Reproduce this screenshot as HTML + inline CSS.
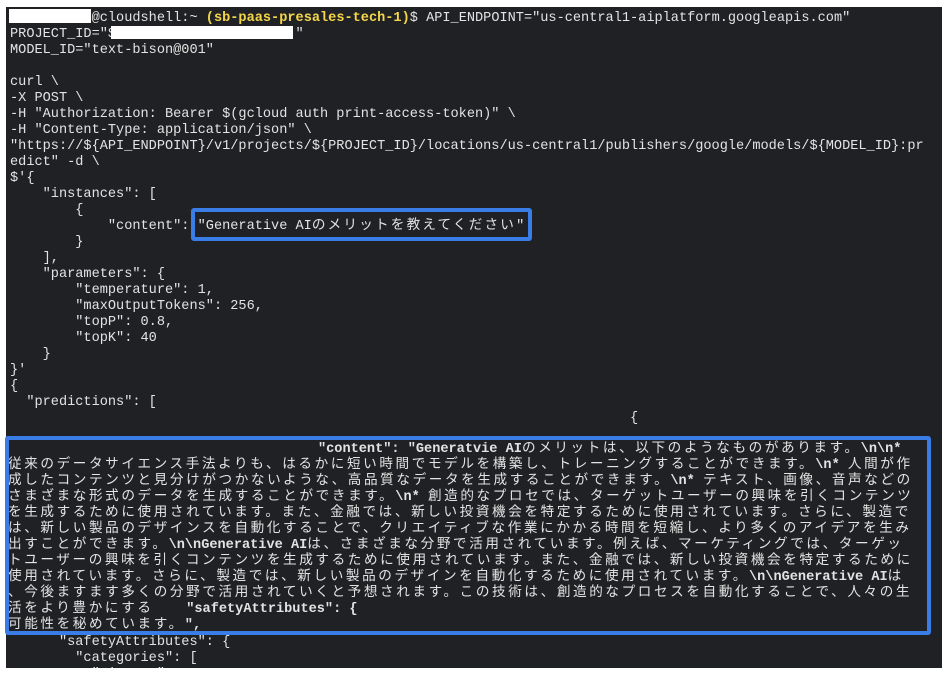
<!DOCTYPE html>
<html><head><meta charset="utf-8"><style>
body{margin:0;width:949px;height:680px;background:#fff;position:relative;overflow:hidden}
#t{position:absolute;left:6px;top:7px;width:936px;height:661px;background:#202124}
.l{position:absolute;left:10px;margin-top:3px;white-space:pre;font-family:"Liberation Mono","Noto Sans CJK JP",monospace;font-size:13.6px;line-height:16px;color:#e3e3e3}
.y{color:#f5d64a;font-weight:bold}
.jp{font-family:"Liberation Mono","Noto Sans CJK JP",monospace;font-size:13.6px;letter-spacing:2.6px;color:#e3e3e3}
.jp b{letter-spacing:0;font-size:13.6px;font-family:"Liberation Mono",monospace}
.w{position:absolute;background:#fff}
.box{position:absolute;border:4px solid #3a7de6;border-radius:3px;box-sizing:border-box}
</style></head><body>
<div id="t"></div>
<div class="l" style="top:8px">          @cloudshell:~ <span class="y">(sb-paas-presales-tech-1)</span>$ API_ENDPOINT="us-central1-aiplatform.googleapis.com"</div>
<div class="w" style="left:9px;top:9px;width:82px;height:14px"></div>
<div class="l" style="top:24px">PROJECT_ID="$                      "</div>
<div class="w" style="left:111px;top:26px;width:182px;height:13px"></div>
<div class="l" style="top:40px">MODEL_ID="text-bison@001"</div>
<div class="l" style="top:72px">curl \</div>
<div class="l" style="top:88px">-X POST \</div>
<div class="l" style="top:104px">-H "Authorization: Bearer $(gcloud auth print-access-token)" \</div>
<div class="l" style="top:120px">-H "Content-Type: application/json" \</div>
<div class="l" style="top:136px">"https://${API_ENDPOINT}/v1/projects/${PROJECT_ID}/locations/us-central1/publishers/google/models/${MODEL_ID}:pr</div>
<div class="l" style="top:152px">edict" -d \</div>
<div class="l" style="top:168px">$'{</div>
<div class="l" style="top:184px">    "instances": [</div>
<div class="l" style="top:200px">        {</div>
<div class="l" style="top:216px">            "content": "Generative AI<span class="jp" style="letter-spacing:2.2px">のメリットを教えてください</span>"</div>
<div class="l" style="top:232px">        }</div>
<div class="l" style="top:248px">    ],</div>
<div class="l" style="top:264px">    "parameters": {</div>
<div class="l" style="top:280px">        "temperature": 1,</div>
<div class="l" style="top:296px">        "maxOutputTokens": 256,</div>
<div class="l" style="top:312px">        "topP": 0.8,</div>
<div class="l" style="top:328px">        "topK": 40</div>
<div class="l" style="top:344px">    }</div>
<div class="l" style="top:360px">}'</div>
<div class="l" style="top:376px">{</div>
<div class="l" style="top:392px">  "predictions": [</div>
<div class="l" style="top:408px">                                                                            {</div>
<div class="box" style="left:191px;top:208px;width:341px;height:33px"></div>

<div class="l" style="top:439px;left:8px;font-weight:bold">                                      "content": "Generatvie AI<span class="jp" style="font-weight:normal">のメリットは、以下のようなものがあります。<b>\n\n*</b></span></div>
<div class="l jp" style="top:455px;left:8px">従来のデータサイエンス手法よりも、はるかに短い時間でモデルを構築し、トレーニングすることができます。<b>\n* </b>人間が作</div>
<div class="l jp" style="top:471px;left:8px">成したコンテンツと見分けがつかないような、高品質なデータを生成することができます。<b>\n* </b>テキスト、画像、音声などの</div>
<div class="l jp" style="top:487px;left:8px">さまざまな形式のデータを生成することができます。<b>\n* </b>創造的なプロセでは、ターゲットユーザーの興味を引くコンテンツ</div>
<div class="l jp" style="top:503px;left:8px">を生成するために使用されています。また、金融では、新しい投資機会を特定するために使用されています。さらに、製造で</div>
<div class="l jp" style="top:519px;left:8px">は、新しい製品のデザインスを自動化することで、クリエイティブな作業にかかる時間を短縮し、より多くのアイデアを生み</div>
<div class="l jp" style="top:535px;left:8px">出すことができます。<b>\n\nGenerative AI</b>は、さまざまな分野で活用されています。例えば、マーケティングでは、ターゲッ</div>
<div class="l jp" style="top:551px;left:8px">トユーザーの興味を引くコンテンツを生成するために使用されています。また、金融では、新しい投資機会を特定するために</div>
<div class="l jp" style="top:567px;left:8px">使用されています。さらに、製造では、新しい製品のデザインを自動化するために使用されています。<b>\n\nGenerative AI</b>は</div>
<div class="l jp" style="top:583px;left:8px">、今後ますます多くの分野で活用されていくと予想されます。この技術は、創造的なプロセスを自動化することで、人々の生</div>
<div class="l jp" style="top:599px;left:8px">活をより豊かにする<b>    "safetyAttributes": {</b></div>
<div class="l jp" style="top:615px;left:8px">可能性を秘めています。<b>",</b></div>
<div class="box" style="left:5px;top:436px;width:926px;height:199px"></div>
<div class="l" style="top:632px">      "safetyAttributes": {</div>
<div class="l" style="top:648px">        "categories": [</div>
<div class="l" style="top:664px;height:1px;overflow:hidden">          "Finance"</div>
</body></html>
